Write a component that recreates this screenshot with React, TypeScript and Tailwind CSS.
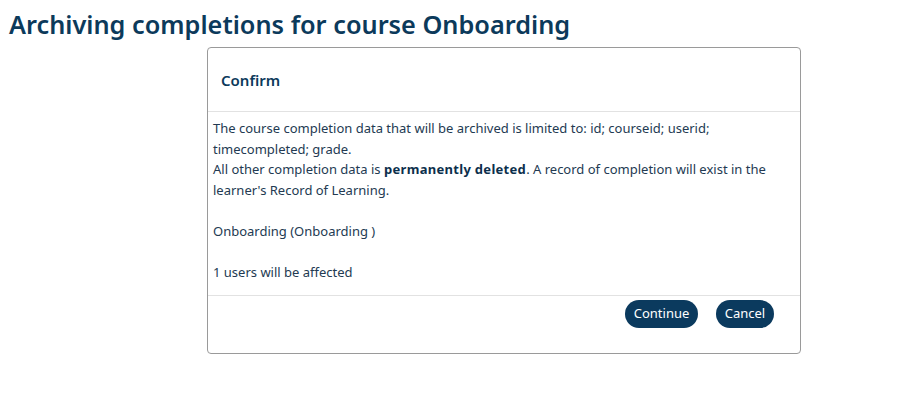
export default function App() {
  const btn =
    'flex h-[28px] items-center justify-center rounded-full bg-[#0b3a5e] text-[13px] text-white';

  return (
    <div className="min-h-screen bg-white font-['Noto_Sans',sans-serif] text-[#233a52]">
      <h1 className="pt-[9px] pl-[9px] text-[25.3px] leading-[30px] font-semibold text-[#0c3a5b]">
        Archiving completions for course Onboarding
      </h1>

      <div className="mt-[8px] ml-[207px] w-[594px] rounded-[4px] border border-[#9a9a9a] bg-white">
        <div className="flex h-[64px] items-center border-b border-[#e2e2e2] px-[13px]">
          <h2 className="text-[15px] leading-[22px] font-semibold text-[#0c3a5b]">Confirm</h2>
        </div>

        <div className="px-[5px] pt-[6px] pb-[13px] text-[13px] leading-[20.5px]">
          The course completion data that will be archived is limited to: id; courseid; userid; timecompleted; grade.
          <br />
          All other completion data is{' '}
          <strong className="font-bold tracking-[0.3px] text-[#0c2f4c]">permanently deleted</strong>. A record of
          completion will exist in the learner's Record of Learning.
          <br />
          <br />
          Onboarding (Onboarding )
          <br />
          <br />
          1 users will be affected
        </div>

        <div className="flex justify-end gap-[18px] border-t border-[#e2e2e2] pt-[4px] pr-[26px] pb-[25px]">
          <button type="button" className={`${btn} w-[73px]`}>
            Continue
          </button>
          <button type="button" className={`${btn} w-[58px]`}>
            Cancel
          </button>
        </div>
      </div>
    </div>
  );
}
